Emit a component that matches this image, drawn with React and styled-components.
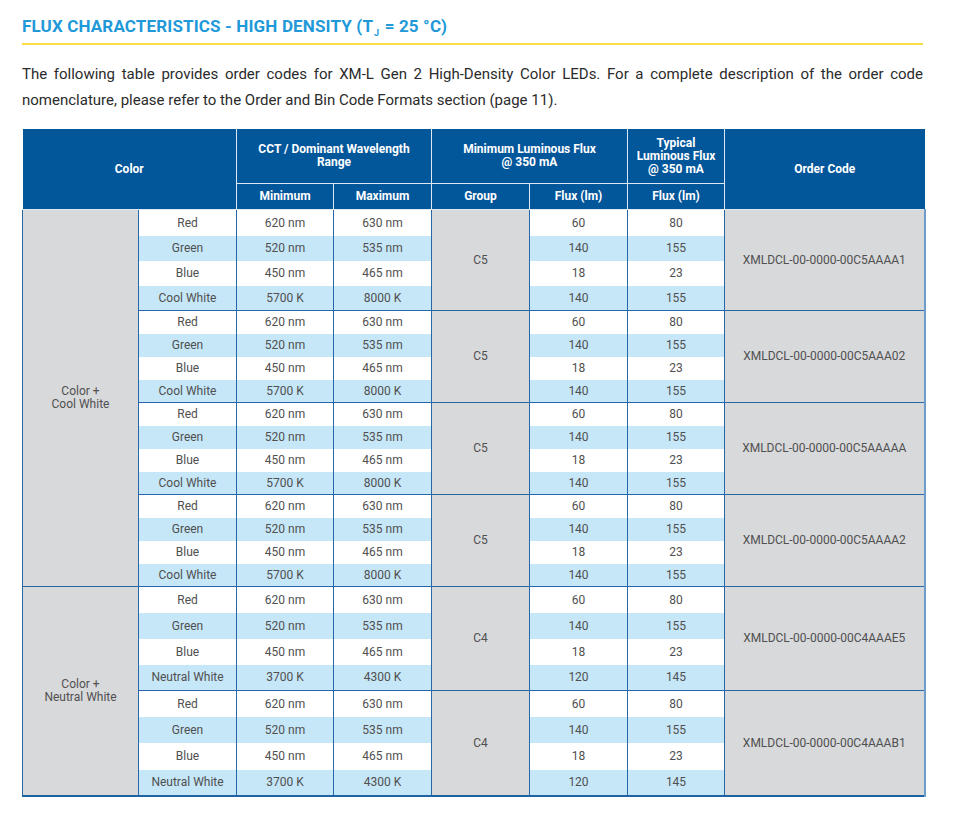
import React from "react";
import styled, { createGlobalStyle } from "styled-components";

const Global = createGlobalStyle`
  html, body { margin: 0; padding: 0; background: #fff; }
  body { font-family: Roboto, "Liberation Sans", Arial, sans-serif; }
`;

const Page = styled.div`
  width: 956px;
  box-sizing: border-box;
  padding: 14px 33px 0 22px;
`;

const Title = styled.h2`
  margin: 0;
  font-size: 17px;
  line-height: 24px;
  font-weight: 700;
  color: #2199d9;
  letter-spacing: 0.15px;
  sub {
    font-size: 9px;
    vertical-align: -4px;
    line-height: 0;
    margin: 0 1px;
  }
`;

const Rule = styled.div`
  height: 2px;
  background: #fddd42;
  margin-top: 5px;
`;

const Para = styled.p`
  margin: 16px 0 0;
  font-size: 15px;
  line-height: 26px;
  color: #2b2b2b;
  text-align: justify;
`;

const Table = styled.table`
  margin-top: 16px;
  width: 902px;
  table-layout: fixed;
  border-collapse: collapse;
  font-size: 12px;
  text-align: center;
  border-bottom: 2px solid #1d62a3;
`;

const HeadCell = styled.th`
  background: #02569a;
  color: #fff;
  font-weight: 700;
  font-size: 12px;
  line-height: 13px;
  height: ${(p) => p.$h || 25}px;
  padding: 0 6px;
  border: 1px solid #dfe9f3;
  border-top: none;
  ${(p) => (p.$first ? "border-left: none;" : "")}
  ${(p) => (p.$last ? "border-right: none;" : "")}
`;

const Cell = styled.td`
  height: ${(p) => p.$h}px;
  padding: 0 4px;
  color: #505050;
  background: ${(p) => (p.$tone === "gray" ? "#d8d9db" : p.$tone === "blue" ? "#c6e7f8" : "#fff")};
  border-left: 1px solid #2767a5;
  border-right: ${(p) => (p.$edge ? "2px solid #6d9ecb" : "1px solid #2767a5")};
  border-top: ${(p) => (p.$top ? "1px solid #2767a5" : "none")};
  line-height: 13px;
  white-space: nowrap;
`;

const cool = [
  ["Red", "620 nm", "630 nm", "60", "80"],
  ["Green", "520 nm", "535 nm", "140", "155"],
  ["Blue", "450 nm", "465 nm", "18", "23"],
  ["Cool White", "5700 K", "8000 K", "140", "155"],
];
const neutral = [
  ["Red", "620 nm", "630 nm", "60", "80"],
  ["Green", "520 nm", "535 nm", "140", "155"],
  ["Blue", "450 nm", "465 nm", "18", "23"],
  ["Neutral White", "3700 K", "4300 K", "120", "145"],
];

const supers = [
  {
    label: ["Color +", "Cool White"],
    groups: [
      { code: "XMLDCL-00-0000-00C5AAAA1", bin: "C5", rows: cool, h: [26, 25, 25, 24] },
      { code: "XMLDCL-00-0000-00C5AAA02", bin: "C5", rows: cool, h: [23, 23, 23, 22] },
      { code: "XMLDCL-00-0000-00C5AAAAA", bin: "C5", rows: cool, h: [23, 23, 23, 22] },
      { code: "XMLDCL-00-0000-00C5AAAA2", bin: "C5", rows: cool, h: [23, 23, 23, 22] },
    ],
  },
  {
    label: ["Color +", "Neutral White"],
    groups: [
      { code: "XMLDCL-00-0000-00C4AAAE5", bin: "C4", rows: neutral, h: [26, 26, 26, 25] },
      { code: "XMLDCL-00-0000-00C4AAAB1", bin: "C4", rows: neutral, h: [26, 26, 27, 25] },
    ],
  },
];

const widths = [116, 98, 97, 98, 98, 98, 97, 200];

export default function App() {
  const body = [];
  supers.forEach((s, si) => {
    const total = s.groups.length * 4;
    s.groups.forEach((g, gi) => {
      g.rows.forEach((r, ri) => {
        const tone = ri % 2 === 0 ? "white" : "blue";
        const top = ri === 0;
        body.push(
          <tr key={`${si}-${gi}-${ri}`}>
            {gi === 0 && ri === 0 && (
              <Cell $tone="gray" $top $h={g.h[0]} rowSpan={total}>
                {s.label[0]}
                <br />
                {s.label[1]}
              </Cell>
            )}
            <Cell $tone={tone} $top={top} $h={g.h[ri]}>{r[0]}</Cell>
            <Cell $tone={tone} $top={top} $h={g.h[ri]}>{r[1]}</Cell>
            <Cell $tone={tone} $top={top} $h={g.h[ri]}>{r[2]}</Cell>
            {ri === 0 && (
              <Cell $tone="gray" $top $h={g.h[0]} rowSpan={4}>
                {g.bin}
              </Cell>
            )}
            <Cell $tone={tone} $top={top} $h={g.h[ri]}>{r[3]}</Cell>
            <Cell $tone={tone} $top={top} $h={g.h[ri]}>{r[4]}</Cell>
            {ri === 0 && (
              <Cell $tone="gray" $top $edge $h={g.h[0]} rowSpan={4}>
                {g.code}
              </Cell>
            )}
          </tr>
        );
      });
    });
  });

  return (
    <>
      <Global />
      <Page>
        <Title>
          FLUX CHARACTERISTICS - HIGH DENSITY (T<sub>J</sub> = 25 °C)
        </Title>
        <Rule />
        <Para>
          The following table provides order codes for XM-L Gen 2 High-Density Color LEDs. For a complete description of the order code nomenclature, please refer to the Order and Bin Code Formats section (page 11).
        </Para>
        <Table>
          <colgroup>
            {widths.map((w, i) => (
              <col key={i} style={{ width: w }} />
            ))}
          </colgroup>
          <thead>
            <tr>
              <HeadCell $first colSpan={2} rowSpan={2}>Color</HeadCell>
              <HeadCell $h={54} colSpan={2}>
                CCT / Dominant Wavelength
                <br />
                Range
              </HeadCell>
              <HeadCell $h={54} colSpan={2}>
                Minimum Luminous Flux
                <br />@ 350 mA
              </HeadCell>
              <HeadCell $h={54}>
                Typical
                <br />
                Luminous Flux
                <br />@ 350 mA
              </HeadCell>
              <HeadCell $last rowSpan={2}>Order Code</HeadCell>
            </tr>
            <tr>
              <HeadCell $h={25}>Minimum</HeadCell>
              <HeadCell $h={25}>Maximum</HeadCell>
              <HeadCell $h={25}>Group</HeadCell>
              <HeadCell $h={25}>Flux (lm)</HeadCell>
              <HeadCell $h={25}>Flux (lm)</HeadCell>
            </tr>
          </thead>
          <tbody>{body}</tbody>
        </Table>
      </Page>
    </>
  );
}
